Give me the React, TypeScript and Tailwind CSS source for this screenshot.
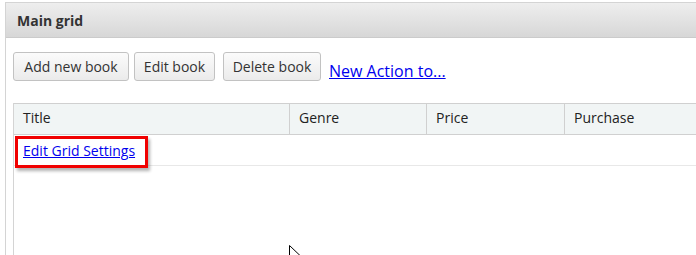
const columns = [
    { name: 'Title', width: 'w-[275px]' },
    { name: 'Genre', width: 'w-[137px]' },
    { name: 'Price', width: 'w-[138px]' },
    { name: 'Purchase', width: 'w-[180px]' },
];

const App = () => {
    return (
        <div className="relative w-[696px] h-[255px] overflow-hidden bg-white font-['Open_Sans',sans-serif] text-[#222]">
            <div className="ml-[5px] mt-[2px] w-[760px] h-[300px] border-l border-t border-[#d4d4d4]">
                {/* panel header */}
                <div className="h-[35px] flex items-center pl-[11px] bg-gradient-to-b from-[#eeeeee] to-[#d7d7d7] border-b border-[#cbcbcb] text-[14px] font-bold text-[#333]">
                    Main grid
                </div>

                <div className="pl-[7px] pt-[14px]">
                    {/* toolbar */}
                    <div className="flex items-center h-[29px]">
                        <button className="w-[116px] h-[29px] rounded-[3px] border border-[#c2c2c2] bg-gradient-to-b from-[#fbfbfb] to-[#ebebeb] text-[14px] text-[#333]">
                            Add new book
                        </button>
                        <button className="ml-[5px] w-[81px] h-[29px] rounded-[3px] border border-[#c2c2c2] bg-gradient-to-b from-[#fbfbfb] to-[#ebebeb] text-[14px] text-[#333]">
                            Edit book
                        </button>
                        <button className="ml-[8px] w-[98px] h-[29px] rounded-[3px] border border-[#c2c2c2] bg-gradient-to-b from-[#fbfbfb] to-[#ebebeb] text-[14px] text-[#333]">
                            Delete book
                        </button>
                        <a href="#" className="ml-[8px] mt-[9px] text-[16px] text-[#0000ee] underline">
                            New Action to...
                        </a>
                    </div>

                    {/* grid */}
                    <div className="mt-[22px] border-l border-[#d4d4d4] h-[200px]">
                        <div className="flex h-[32px] bg-[#f1f5f5] border-t border-b border-[#d0d0d0]">
                            {columns.map((col, i) => (
                                <div
                                    key={col.name}
                                    className={`${col.width} shrink-0 flex items-center pl-[9px] pb-[3px] text-[14px] text-[#222] ${i > 0 ? 'border-l border-[#d0d0d0]' : ''}`}
                                >
                                    {col.name}
                                </div>
                            ))}
                        </div>
                        <div className="relative h-[31px] flex items-center pl-[9px] border-b border-[#e8e8e8]">
                            <a href="#" className="text-[14px] text-[#0000ee] underline">
                                Edit Grid Settings
                            </a>
                            <div className="absolute left-[1px] top-[1px] w-[133px] h-[32px] border-[3px] border-[#f00000] shadow-[2px_3px_3px_rgba(0,0,0,0.3)]" />
                        </div>
                    </div>
                </div>
            </div>

            {/* mouse pointer */}
            <svg className="absolute left-[289px] top-[245px]" width="12" height="18" viewBox="0 0 12 18">
                <path d="M0.5 0.5 L0.5 15 L4 11.5 L6.5 17 L8.5 16 L6 10.5 L11 10.5 Z" fill="#fff" stroke="#000" strokeWidth="1" />
            </svg>
        </div>
    );
};

export default App;
